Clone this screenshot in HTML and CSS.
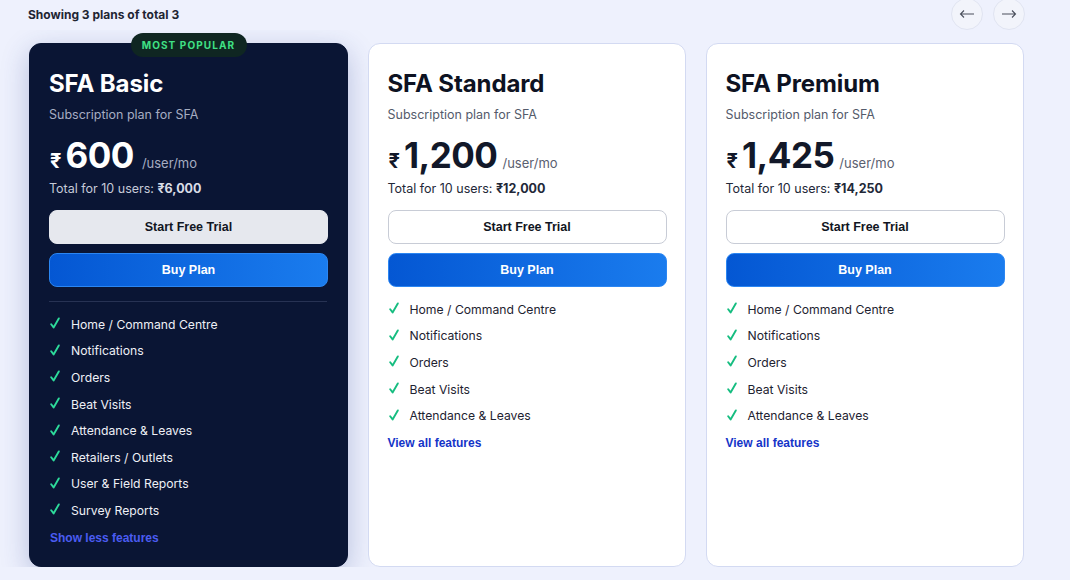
FILE: index.html
```html
<!DOCTYPE html>
<html lang="en">
<head>
<meta charset="utf-8">
<title>Plans</title>
<link rel="stylesheet" href="styles.css">
</head>
<body>
<div class="page">
  <div class="header">
    <div class="count">Showing 3 plans of total 3</div>
    <div class="nav">
      <button class="nav-btn" aria-label="Previous">
        <svg width="16" height="10" viewBox="0 0 16 10"><path d="M15 5H1.5M5 1.5L1.5 5L5 8.5" fill="none" stroke="#4a4f5c" stroke-width="1.1"/></svg>
      </button>
      <button class="nav-btn" aria-label="Next">
        <svg width="16" height="10" viewBox="0 0 16 10"><path d="M1 5H14.5M11 1.5L14.5 5L11 8.5" fill="none" stroke="#4a4f5c" stroke-width="1.1"/></svg>
      </button>
    </div>
  </div>
  <div class="cards">
    <div class="card card-dark">
      <div class="badge">MOST POPULAR</div>
      <h2 class="title">SFA Basic</h2>
      <p class="sub">Subscription plan for SFA</p>
      <div class="price"><span class="cur">₹</span><span class="amt">600</span><span class="per">/user/mo</span></div>
      <p class="total">Total for 10 users: <b>₹6,000</b></p>
      <button class="btn btn-trial">Start Free Trial</button>
      <button class="btn btn-buy">Buy Plan</button>
      <div class="divider"></div>
      <ul class="features">
        <li><svg class="chk" viewBox="0 0 10 12"><path d="M1.2 7.2L3.6 10.4L8.8 1.4"/></svg>Home / Command Centre</li>
        <li><svg class="chk" viewBox="0 0 10 12"><path d="M1.2 7.2L3.6 10.4L8.8 1.4"/></svg>Notifications</li>
        <li><svg class="chk" viewBox="0 0 10 12"><path d="M1.2 7.2L3.6 10.4L8.8 1.4"/></svg>Orders</li>
        <li><svg class="chk" viewBox="0 0 10 12"><path d="M1.2 7.2L3.6 10.4L8.8 1.4"/></svg>Beat Visits</li>
        <li><svg class="chk" viewBox="0 0 10 12"><path d="M1.2 7.2L3.6 10.4L8.8 1.4"/></svg>Attendance &amp; Leaves</li>
        <li><svg class="chk" viewBox="0 0 10 12"><path d="M1.2 7.2L3.6 10.4L8.8 1.4"/></svg>Retailers / Outlets</li>
        <li><svg class="chk" viewBox="0 0 10 12"><path d="M1.2 7.2L3.6 10.4L8.8 1.4"/></svg>User &amp; Field Reports</li>
        <li><svg class="chk" viewBox="0 0 10 12"><path d="M1.2 7.2L3.6 10.4L8.8 1.4"/></svg>Survey Reports</li>
      </ul>
      <a class="more">Show less features</a>
    </div>
    <div class="card">
      <h2 class="title">SFA Standard</h2>
      <p class="sub">Subscription plan for SFA</p>
      <div class="price"><span class="cur">₹</span><span class="amt">1,200</span><span class="per">/user/mo</span></div>
      <p class="total">Total for 10 users: <b>₹12,000</b></p>
      <button class="btn btn-trial">Start Free Trial</button>
      <button class="btn btn-buy">Buy Plan</button>
      <ul class="features">
        <li><svg class="chk" viewBox="0 0 10 12"><path d="M1.2 7.2L3.6 10.4L8.8 1.4"/></svg>Home / Command Centre</li>
        <li><svg class="chk" viewBox="0 0 10 12"><path d="M1.2 7.2L3.6 10.4L8.8 1.4"/></svg>Notifications</li>
        <li><svg class="chk" viewBox="0 0 10 12"><path d="M1.2 7.2L3.6 10.4L8.8 1.4"/></svg>Orders</li>
        <li><svg class="chk" viewBox="0 0 10 12"><path d="M1.2 7.2L3.6 10.4L8.8 1.4"/></svg>Beat Visits</li>
        <li><svg class="chk" viewBox="0 0 10 12"><path d="M1.2 7.2L3.6 10.4L8.8 1.4"/></svg>Attendance &amp; Leaves</li>
      </ul>
      <a class="more">View all features</a>
    </div>
    <div class="card">
      <h2 class="title">SFA Premium</h2>
      <p class="sub">Subscription plan for SFA</p>
      <div class="price"><span class="cur">₹</span><span class="amt">1,425</span><span class="per">/user/mo</span></div>
      <p class="total">Total for 10 users: <b>₹14,250</b></p>
      <button class="btn btn-trial">Start Free Trial</button>
      <button class="btn btn-buy">Buy Plan</button>
      <ul class="features">
        <li><svg class="chk" viewBox="0 0 10 12"><path d="M1.2 7.2L3.6 10.4L8.8 1.4"/></svg>Home / Command Centre</li>
        <li><svg class="chk" viewBox="0 0 10 12"><path d="M1.2 7.2L3.6 10.4L8.8 1.4"/></svg>Notifications</li>
        <li><svg class="chk" viewBox="0 0 10 12"><path d="M1.2 7.2L3.6 10.4L8.8 1.4"/></svg>Orders</li>
        <li><svg class="chk" viewBox="0 0 10 12"><path d="M1.2 7.2L3.6 10.4L8.8 1.4"/></svg>Beat Visits</li>
        <li><svg class="chk" viewBox="0 0 10 12"><path d="M1.2 7.2L3.6 10.4L8.8 1.4"/></svg>Attendance &amp; Leaves</li>
      </ul>
      <a class="more">View all features</a>
    </div>
  </div>
</div>
</body>
</html>
```

FILE: styles.css
```css
* { box-sizing: border-box; }
html, body { margin: 0; padding: 0; }
body {
  background: #eef1fd;
  font-family: Inter, "Noto Sans", sans-serif;
  color: #121829;
  width: 1070px;
  height: 580px;
  overflow: hidden;
}
.page {
  padding: 0 45px 0 29px;
}
.header {
  height: 30px;
  display: flex;
  align-items: center;
  justify-content: space-between;
}
.count {
  font-size: 12px;
  font-weight: 700;
  color: #1f2533;
  margin-left: -1px;
  margin-top: -1px;
}
.nav {
  display: flex;
  gap: 10px;
  margin-top: -2px;
}
.nav-btn {
  width: 32px;
  height: 32px;
  border-radius: 50%;
  border: 1px solid #e0e4f1;
  background: #f2f4fb;
  display: flex;
  align-items: center;
  justify-content: center;
  padding: 0;
}
.cards {
  display: grid;
  grid-template-columns: 319px 318.5px 318.5px;
  gap: 19.5px;
  padding-top: 13px;
  overflow: hidden;
  margin-left: -29px;
  padding-left: 29px;
  padding-right: 20px;
  margin-right: -20px;
}
.card {
  position: relative;
  background: #ffffff;
  border: 1px solid #d3daf2;
  border-radius: 12px;
  padding: 25px 20px 19px 19px;
  display: flex;
  flex-direction: column;
}
.card-dark {
  background: #0a1534;
  border-color: #0a1534;
  box-shadow: 0 8px 28px rgba(40, 60, 140, 0.28);
}
.badge {
  position: absolute;
  top: -11px;
  left: 50%;
  transform: translateX(-50%);
  width: 116px;
  height: 24px;
  border-radius: 12px;
  background: #0f2622;
  color: #3fe085;
  font-size: 10px;
  font-weight: 700;
  letter-spacing: 1.1px;
  display: flex;
  align-items: center;
  justify-content: center;
}
.title {
  margin: 0;
  font-size: 24px;
  line-height: 30px;
  font-weight: 700;
  letter-spacing: -0.1px;
  color: #0d1222;
}
.card-dark .title { color: #ffffff; }
.sub {
  margin: 7px 0 0;
  font-size: 12.5px;
  line-height: 18px;
  color: #545b6b;
}
.card-dark .sub { color: #a6adc2; }
.price {
  display: flex;
  align-items: baseline;
  margin-top: 11px;
  height: 40px;
}
.cur {
  font-size: 20px;
  font-weight: 700;
  margin-right: 4px;
  margin-left: 1px;
}
.amt {
  font-size: 35px;
  line-height: 40px;
  font-weight: 700;
  letter-spacing: -0.5px;
}
.per {
  font-size: 13px;
  color: #5a6070;
  margin-left: 5px;
}
.card-dark .cur, .card-dark .amt { color: #ffffff; }
.card-dark .per { color: #a6adc2; margin-left: 8px; }
.total {
  margin: 5px 0 0;
  font-size: 12.5px;
  line-height: 18px;
  color: #222838;
}
.total b { font-weight: 700; }
.card-dark .total { color: #c6cad8; }
.card-dark .total b { color: #d9dce6; }
.btn {
  display: block;
  width: 279px;
  height: 34px;
  border-radius: 8px;
  font-family: "Liberation Sans", Arial, sans-serif;
  font-size: 12.5px;
  font-weight: 700;
  cursor: pointer;
}
.btn-trial {
  margin-top: 12px;
  background: #ffffff;
  color: #111522;
  border: 1px solid #c8ccd6;
}
.card-dark .btn-trial {
  background: #e6e8ee;
  border-color: #e6e8ee;
}
.btn-buy {
  margin-top: 9px;
  background: linear-gradient(90deg, #0457d3 0%, #1a7cee 100%);
  border: 1px solid #2b86f2;
  color: #ffffff;
}
.divider {
  height: 1px;
  background: #273253;
  margin-top: 14px;
}
.features {
  list-style: none;
  margin: 9px 0 0;
  padding: 0;
}
.features li {
  display: flex;
  align-items: center;
  height: 26.6px;
  font-size: 12.2px;
  color: #1e2331;
}
.card-dark .features li { color: #eef0f6; }
.chk {
  width: 10px;
  height: 12px;
  margin: -2px 11px 0 1px;
  fill: none;
  stroke: #16bd80;
  stroke-width: 1.9;
  stroke-linecap: round;
  stroke-linejoin: round;
}
.card-dark .chk { stroke: #2ddb9b; }
.more {
  margin-top: 5px;
  font-family: "Liberation Sans", Arial, sans-serif;
  font-size: 12px;
  font-weight: 700;
  color: #1434c8;
  line-height: 18px;
  margin-left: 0;
}
.card-dark .more { color: #4b5cf2; margin-left: 1px; }
```
